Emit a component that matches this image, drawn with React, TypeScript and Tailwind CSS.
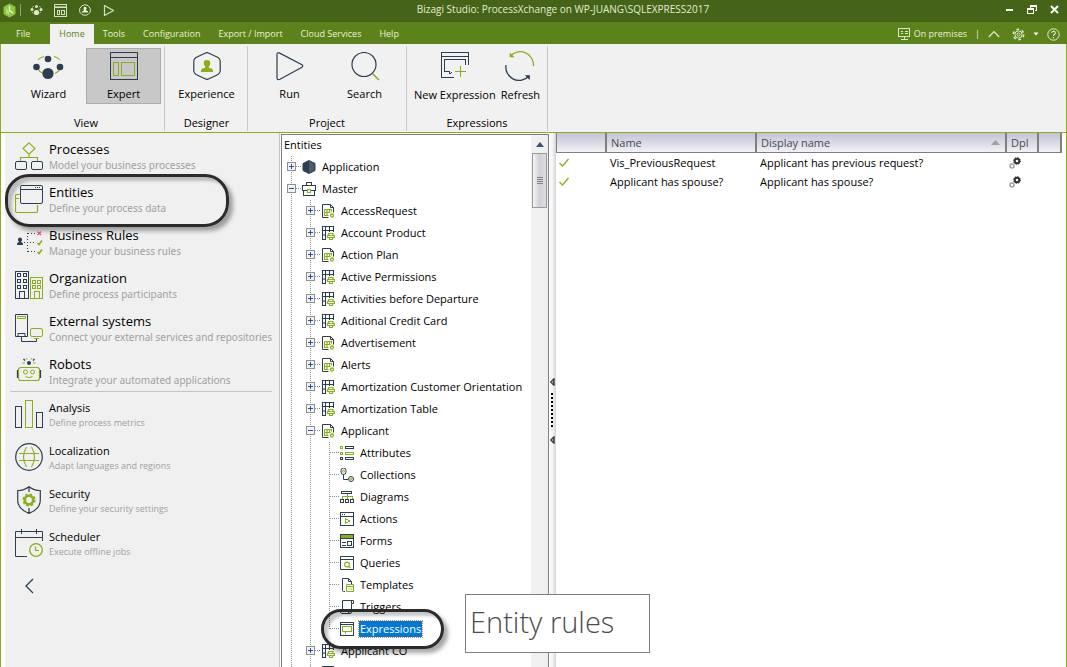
import type { ReactNode } from "react";
import clsx from "clsx";

const NAVY = "#2c3e50";
const GREEN = "#8cae1a";

function Svg({ w, h, children, crisp }: { w: number; h: number; children: ReactNode; crisp?: boolean }) {
  return (
    <svg
      width={w}
      height={h}
      viewBox={`0 0 ${w} ${h}`}
      fill="none"
      stroke={NAVY}
      shapeRendering={crisp ? "crispEdges" : "auto"}
      className="shrink-0"
      aria-hidden="true"
    >
      {children}
    </svg>
  );
}

/* ---------- Title bar ---------- */

function TitleBar() {
  return (
    <header className="flex h-[22px] shrink-0 items-center bg-[#456417] text-[#e3ebd6]">
      <div className="flex flex-1 items-center pb-0.5 pl-[3px]">
        <Svg w={14} h={15}>
          <path d="M6.5 1 L12 4 V11 L6.5 14 L1 11 V4 Z" fill="#8cc63f" stroke="#8cc63f" strokeLinejoin="round" />
          <path d="M6.5 3 V7.5 L10 10" stroke="#e9f7d0" strokeWidth="1.5" />
          <path d="M3 5 V10 L6 12 L6 8 Z" fill="#b5df7c" stroke="none" />
        </Svg>
        <span className="mx-[3px] h-3 w-px bg-[#8fa36f]" />
        <button aria-label="Wizard" className="ml-[6px]">
          <Svg w={13} h={12}>
            <g fill="#dfe8d0" stroke="none">
              <circle cx="6.500" cy="2.500" r="1.500" />
              <circle cx="2" cy="5.500" r="1.500" />
              <circle cx="11" cy="5.500" r="1.500" />
              <circle cx="6.500" cy="8.500" r="2.600" />
            </g>
            <path d="M2 3.500 L4 2.200 M11 3.500 L9 2.200 M2 8 L3.500 9 M11 8 L9.500 9" stroke="#b9c99f" strokeWidth=".8" />
          </Svg>
        </button>
        <button aria-label="Expert" className="ml-[11px]">
          <Svg w={13} h={13} crisp>
            <path d="M.5 .5 H12.5 V12.500 H.5 Z M.5 3.500 H12.500 M3.500 6 V10.500 H5.500 V6 Z M7.500 6 H10.500 V10.500 H7.500 Z" stroke="#d5dfc4" />
            <path d="M1 2 H12" stroke="#9fb080" />
          </Svg>
        </button>
        <button aria-label="Experience" className="ml-3">
          <Svg w={12} h={12}>
            <path d="M6 .7 L9 1.700 L11.300 4.500 V8 L9 10.500 L6 11.400 L3 10.500 L.7 8 V4.500 L3 1.700 Z" stroke="#d5dfc4" />
            <path d="M4.500 4.300 a1.500 1.500 0 0 1 3 0 L7 6.300 L9 7.500 V8.500 H3 V7.500 L5 6.300 Z" fill="#eef3e4" stroke="none" />
          </Svg>
        </button>
        <button aria-label="Run" className="ml-3">
          <Svg w={12} h={13}>
            <path d="M1.500 1.500 L10.500 6.500 L1.500 11.500 Z" stroke="#d5dfc4" strokeWidth="1.200" strokeLinejoin="round" />
          </Svg>
        </button>
      </div>
      <h1 className="pb-1 pl-16 text-[10px] leading-4">
        Bizagi Studio: ProcessXchange on WP-JUANG\SQLEXPRESS2017
      </h1>
      <div className="flex flex-1 items-center justify-end gap-[13px] pr-2 pb-1">
        <button aria-label="Minimize">
          <Svg w={9} h={9} crisp>
            <path d="M1 5 H8" stroke="#fff" strokeWidth="2" />
          </Svg>
        </button>
        <button aria-label="Restore">
          <Svg w={10} h={9} crisp>
            <path d="M3.500 3 V.5 H9.500 V5.500 H7.500 M3 1 H10 M.5 3.500 H6.500 V8.500 H.5 Z M0 4 H7" stroke="#fff" />
          </Svg>
        </button>
        <button aria-label="Close">
          <Svg w={9} h={9}>
            <path d="M1 1 L8 8 M8 1 L1 8" stroke="#fff" strokeWidth="2" />
          </Svg>
        </button>
      </div>
    </header>
  );
}

/* ---------- Ribbon tabs ---------- */

function RibbonTabs() {
  const tabs = ["Tools", "Configuration", "Export / Import", "Cloud Services", "Help"];
  return (
    <nav className="flex h-[22px] shrink-0 items-end bg-[#5c821b] text-[9px] leading-5 font-medium text-[#e9f2d8]">
      <a href="#file" className="mr-[11px] pr-[9px] pl-4">File</a>
      <a href="#home" className="bg-[#f1f1f1] px-[9px] text-[#5c821b]">Home</a>
      {tabs.map((tab) => (
        <a key={tab} href={"#" + tab} className="px-[9px]">{tab}</a>
      ))}
      <div className="ml-auto flex h-5 items-center pr-[7px]">
        <Svg w={12} h={12} crisp>
          <path d="M.5 .5 H11.500 V8.500 H.5 Z M2.500 3.500 H4.500 M2.500 5.500 H4.500 M6.500 3.500 H9.500 M6.500 5.500 H9.500 M6.500 9 V11 M2.500 11.500 H9.500" stroke="#dbe6c4" />
        </Svg>
        <span className="ml-1">On premises</span>
        <span className="mx-2">|</span>
        <button aria-label="Collapse ribbon">
          <Svg w={12} h={8}>
            <path d="M.8 7 L6 1.500 L11.200 7" stroke="#e3edd0" strokeWidth="1.200" />
          </Svg>
        </button>
        <button aria-label="Settings" className="ml-3 flex items-center gap-2">
          <Svg w={13} h={13}>
            <g stroke="#e3edd0">
              <circle cx="6.500" cy="6.500" r="3.600" />
              <circle cx="6.500" cy="6.500" r="1.500" />
              <circle cx="6.500" cy="6.500" r="5.200" strokeWidth="1.600" strokeDasharray="2.700 2.740" />
            </g>
          </Svg>
          <Svg w={6} h={4}>
            <path d="M.5 .5 H5.500 L3 3.500 Z" fill="#fff" stroke="none" />
          </Svg>
        </button>
        <button aria-label="Help" className="ml-2">
          <Svg w={13} h={13}>
            <circle cx="6.500" cy="6.500" r="5.700" stroke="#e3edd0" />
            <path d="M4.700 5 a1.800 1.800 0 1 1 2.600 1.600 Q6.500 7 6.500 8 M6.500 9 V10.200" stroke="#e3edd0" strokeWidth="1.100" />
          </Svg>
        </button>
      </div>
    </nav>
  );
}

/* ---------- Ribbon ---------- */

const ribbonIcons = {
  wizard: (
    <Svg w={32} h={30}>
      <path d="M5 8 Q7 5.500 11 4.500 M27 8 Q25 5.500 21 4.500 M5 17 Q6.500 20 10 21.500 M27 17 Q25.500 20 22 21.500" stroke={GREEN} strokeWidth="1.100" />
      <g fill={NAVY} stroke="none">
        <circle cx="15" cy="7" r="3.300" />
        <circle cx="3.500" cy="15" r="3.300" />
        <circle cx="27" cy="15" r="3.300" />
        <circle cx="15" cy="21.500" r="5.600" />
      </g>
    </Svg>
  ),
  expert: (
    <Svg w={28} h={30} crisp>
      <path d="M.5 .5 H27.500 V27.500 H.5 Z M0 5.500 H28" />
      <path d="M3.500 10.500 H8.500 V23.500 H3.500 Z M11.500 10.500 H24.500 V23.500 H11.500 Z" stroke={GREEN} />
    </Svg>
  ),
  experience: (
    <Svg w={28} h={30}>
      <path d="M12 1.200 Q14 .2 16 1.200 L25 5.500 Q27 6.800 27.200 9 V19 Q27 21.200 25 22.500 L16 26.800 Q14 27.800 12 26.800 L3 22.500 Q1 21.200 .8 19 V9 Q1 6.800 3 5.500 Z" strokeWidth="1.200" />
      <path d="M14 8 a3.300 3.300 0 0 1 3.300 3.300 q0 2 -1.500 3.300 v1.200 q4 .6 4.200 2.700 v1.500 h-12 v-1.500 q.2 -2.100 4.200 -2.700 v-1.200 q-1.500 -1.300 -1.500 -3.300 a3.300 3.300 0 0 1 3.300 -3.300 Z" fill={GREEN} stroke="none" />
    </Svg>
  ),
  run: (
    <Svg w={28} h={30}>
      <path d="M1 2.200 Q1 .3 3.200 .9 L26 12.800 Q27.500 14 26 15.200 L4 27.300 Q1 28.300 1 26 Z" strokeWidth="1.200" />
    </Svg>
  ),
  search: (
    <Svg w={30} h={30}>
      <circle cx="14" cy="12.500" r="12" strokeWidth="1.200" />
      <path d="M22.500 21.500 L29 28" stroke={GREEN} strokeWidth="1.500" />
    </Svg>
  ),
  newExpression: (
    <Svg w={28} h={30} crisp>
      <path d="M13 26.500 H.5 V1.500 H27.500 V14 M0 5.500 H28 M24.500 14 V8.500 H3.500 V20.500 H8.500 V23" />
      <path d="M8.500 23.500 L11 21" />
      <path d="M19.500 15 V26 M14 20.500 H25" stroke={GREEN} />
    </Svg>
  ),
  refresh: (
    <Svg w={30} h={30}>
      <path d="M5 5.500 A13.300 13.300 0 0 1 28.500 15" stroke={GREEN} strokeWidth="1.300" />
      <path d="M5 2 V6 H9 Z" fill={GREEN} stroke={GREEN} strokeWidth=".6" />
      <path d="M1 14 A13.300 13.300 0 0 0 24 25" strokeWidth="1.300" />
      <path d="M20.500 24.500 H24.500 V28.500 Z" fill={NAVY} strokeWidth=".6" />
    </Svg>
  ),
};

function RibbonButton({ icon, label, active, compact }: { icon: ReactNode; label: string; active?: boolean; compact?: boolean }) {
  return (
    <button
      className={clsx(
        "flex h-14 flex-col items-center pt-[3px] leading-5 whitespace-nowrap",
        !compact && "w-[75px] border",
        compact ? "gap-1 pt-1" : "gap-0.5",
        active ? "border-[#adadad] bg-[#c8c8c8]" : "border-transparent",
      )}
    >
      {icon}
      {label}
    </button>
  );
}

function RibbonGroup({ title, children, className }: { title: string; children: ReactNode; className: string }) {
  return (
    <section className={clsx("flex flex-col border-r border-[#c9c9c9]", className)}>
      <div className="flex justify-center gap-[inherit] pt-0.5">{children}</div>
      <h2 className="mt-auto text-center leading-4">{title}</h2>
    </section>
  );
}

function Ribbon() {
  return (
    <div className="flex h-[89px] shrink-0 border-b border-[#8cae1a] bg-[#f1f1f1] pt-0.5 pb-px text-[11px] text-black">
      <RibbonGroup title="View" className="pr-[3px] pl-[10px]">
        <RibbonButton icon={ribbonIcons.wizard} label="Wizard" />
        <RibbonButton icon={ribbonIcons.expert} label="Expert" active />
      </RibbonGroup>
      <RibbonGroup title="Designer" className="pr-[3px] pl-1">
        <RibbonButton icon={ribbonIcons.experience} label="Experience" />
      </RibbonGroup>
      <RibbonGroup title="Project" className="px-1">
        <RibbonButton icon={ribbonIcons.run} label="Run" />
        <RibbonButton icon={ribbonIcons.search} label="Search" />
      </RibbonGroup>
      <RibbonGroup title="Expressions" className="gap-[5px] px-[7px]">
        <RibbonButton icon={ribbonIcons.newExpression} label="New Expression" compact />
        <RibbonButton icon={ribbonIcons.refresh} label="Refresh" compact />
      </RibbonGroup>
    </div>
  );
}

/* ---------- Sidebar ---------- */

const windows = (x: number, y: number) => `M${x} ${y} h3 v3 h-3 Z`;

const sideIcons = {
  processes: (
    <Svg w={28} h={28}>
      <path d="M14 .8 L20 6.500 L14 12.200 L8 6.500 Z M14 12.500 V15.500 M5.500 19 V15.500 H22.500 V19" stroke={GREEN} strokeWidth="1.100" />
      <rect x=".5" y="19.500" width="11" height="8" rx="1.500" />
      <rect x="16.500" y="19.500" width="11" height="8" rx="1.500" />
    </Svg>
  ),
  entities: (
    <Svg w={28} h={28}>
      <path d="M5 9.500 H2 Q.5 9.500 .5 11 V26 Q.5 27.500 2 27.500 H21 Q22.500 27.500 22.500 26 V20 M.5 13.500 H4" stroke={GREEN} strokeWidth="1.200" />
      <rect x="5.500" y=".5" width="22" height="18" rx="1.500" />
      <path d="M5.500 4.500 H27.500" />
      <path d="M20 2.500 H21 M22 2.500 H23 M24 2.500 H25" />
    </Svg>
  ),
  rules: (
    <Svg w={28} h={28}>
      <path d="M5 9.500 a2 2 0 0 1 2 2 q0 1.500 -1 2.500 q2 .5 2 2 v1 h-6 v-1 q0 -1.500 2 -2 q-1 -1 -1 -2.500 a2 2 0 0 1 2 -2 Z" fill={NAVY} stroke="none" />
      <path d="M9 14.500 H20 M12.500 5 V25 M13 5.500 H20 M13 23.500 H20" strokeDasharray="1 2" />
      <path d="M22.500 3.500 L26 7 M26 3.500 L22.500 7" stroke="#d9536a" strokeWidth="1.300" />
      <path d="M22.500 15 L24 16.500 L27 12.500 M22.500 24 L24 25.500 L27 21.500" stroke={GREEN} strokeWidth="1.600" />
    </Svg>
  ),
  organization: (
    <Svg w={28} h={28} crisp>
      <path d={`M.5 .5 H13.500 V27.500 H.5 Z M4.500 27 V20.500 H9.500 V27 ${windows(2.5, 2.5)} ${windows(8.5, 2.5)} ${windows(2.5, 8.5)} ${windows(8.5, 8.5)} ${windows(2.5, 14.5)} ${windows(8.5, 14.5)}`} />
      <path d={`M15.500 6.500 H27.500 V27.500 H15.500 Z M19.500 27 V20.500 H24.500 V27 ${windows(17.5, 9)} ${windows(22.5, 9)} ${windows(17.5, 14.5)} ${windows(22.5, 14.5)}`} stroke={GREEN} />
    </Svg>
  ),
  external: (
    <Svg w={28} h={28}>
      <path d="M.5 .5 H12.500 V22.500 H.5 Z M3 22 V19.500 H10 V22 M6.500 23 V27.500 H21.500 V25" />
      <path d="M2.500 2.500 H10.500 V4.500 H2.500 Z M17 14.500 H26 Q27.500 14.500 27.500 16 V21 Q27.500 22.500 26 22.500 H17 Q15.500 22.500 15.500 21 V16 Q15.500 14.500 17 14.500 Z M19 24.500 H24" stroke={GREEN} />
    </Svg>
  ),
  robots: (
    <Svg w={28} h={28}>
      <circle cx="14" cy="6" r="2" fill={NAVY} stroke="none" />
      <path d="M10 3.500 L8.500 2 M18 3.500 L19.500 2" strokeWidth="1.300" />
      <path d="M10 6 H7.500 M18 6 H20.500 M12 2.500 L11 1 M16 2.500 L17 1" stroke={GREEN} />
      <rect x="3.500" y="10.500" width="21" height="13" rx="2.500" stroke={GREEN} strokeWidth="1.200" />
      <path d="M2.500 13 V21 M25.500 13 V21" strokeWidth="1.200" />
      <circle cx="10.500" cy="15" r="2" stroke={GREEN} />
      <circle cx="17.500" cy="15" r="2" stroke={GREEN} />
      <path d="M10.500 19.500 Q14 22 17.500 19.500" stroke={GREEN} />
    </Svg>
  ),
  analysis: (
    <Svg w={28} h={28} crisp>
      <path d="M.5 6.500 H6.500 V27.500 H.5 Z M21.500 12.500 H27.500 V27.500 H21.500 Z" />
      <path d="M10.500 .5 H17.500 V27.500 H10.500 Z" stroke={GREEN} />
    </Svg>
  ),
  localization: (
    <Svg w={28} h={28}>
      <circle cx="14" cy="14" r="13.300" strokeWidth="1.200" />
      <path d="M4 10.500 H24 M4 17.500 H24 M11.500 4 Q5.500 14 11.500 24 M16.500 4 Q22.500 14 16.500 24" stroke={GREEN} strokeWidth="1.100" />
    </Svg>
  ),
  security: (
    <Svg w={28} h={28}>
      <path d="M14 .7 Q9 4.500 2.700 4.500 V14 Q2.700 23 14 27.400 Q25.300 23 25.300 14 V4.500 Q19 4.500 14 .7 Z M14 1 V6 M14 22 V27" strokeWidth="1.200" />
      <circle cx="14" cy="14" r="4.200" stroke={GREEN} strokeWidth="2.600" />
      <circle cx="14" cy="14" r="5.800" stroke={GREEN} strokeWidth="1.600" strokeDasharray="2.400 2.155" />
    </Svg>
  ),
  scheduler: (
    <Svg w={28} h={28}>
      <path d="M12 27.500 H.5 V2.500 H27.500 V12 M.5 8.500 H27.500 M6.500 0 V5 M21.500 0 V5" />
      <circle cx="21" cy="21" r="6.300" stroke={GREEN} strokeWidth="1.300" />
      <path d="M20.500 17.500 V21.500 H24" stroke={GREEN} strokeWidth="1.200" />
    </Svg>
  ),
};

const primaryItems = [
  { icon: sideIcons.processes, title: "Processes", text: "Model your business processes" },
  { icon: sideIcons.entities, title: "Entities", text: "Define your process data", marked: true },
  { icon: sideIcons.rules, title: "Business Rules", text: "Manage your business rules" },
  { icon: sideIcons.organization, title: "Organization", text: "Define process participants" },
  { icon: sideIcons.external, title: "External systems", text: "Connect your external services and repositories" },
  { icon: sideIcons.robots, title: "Robots", text: "Integrate your automated applications" },
];

const secondaryItems = [
  { icon: sideIcons.analysis, title: "Analysis", text: "Define process metrics" },
  { icon: sideIcons.localization, title: "Localization", text: "Adapt languages and regions" },
  { icon: sideIcons.security, title: "Security", text: "Define your security settings" },
  { icon: sideIcons.scheduler, title: "Scheduler", text: "Execute offline jobs" },
];

function SideItem({ icon, title, text, marked, small }: { icon: ReactNode; title: string; text: string; marked?: boolean; small?: boolean }) {
  return (
    <li className="relative">
      {marked && (
        <span className="pointer-events-none absolute -top-1 left-0 h-[53px] w-56 rounded-[24px] border-3 border-[#2b2b2b] shadow-[4px_4px_4px_rgba(0,0,0,0.35),inset_4px_4px_3px_rgba(0,0,0,0.22)]" />
      )}
      <a href={"#" + title} className="relative flex h-[43px] items-center gap-[6px] pb-px pl-[10px]">
        {icon}
        <span className="flex flex-col pt-px whitespace-nowrap">
          <span className={clsx("leading-4 text-black", small ? "text-[11px]" : "text-[13px]")}>{title}</span>
          <span
            className={clsx(
              "text-[#a0a0a0]",
              small ? "text-[9px] leading-[14px]" : "font-['Noto_Sans',sans-serif] text-[10px] leading-4",
            )}
          >
            {text}
          </span>
        </span>
      </a>
    </li>
  );
}

function Sidebar() {
  return (
    <aside className="ml-1 w-[275px] shrink-0 border-r border-[#c4c4c4] bg-[#f0f0f0] pt-0.5">
      <ul>
        {primaryItems.map((item) => (
          <SideItem key={item.title} {...item} />
        ))}
      </ul>
      <hr className="-mt-0.5 mr-[7px] mb-px ml-[5px] border-[#c4c4c4]" />
      <ul>
        {secondaryItems.map((item) => (
          <SideItem key={item.title} {...item} small />
        ))}
      </ul>
      <button aria-label="Collapse panel" className="mt-[13px] ml-5 block">
        <Svg w={9} h={16}>
          <path d="M8 1 L1 8 L8 15" strokeWidth="1.300" />
        </Svg>
      </button>
    </aside>
  );
}

/* ---------- Entity tree ---------- */

const treeIcons = {
  application: (
    <Svg w={14} h={14}>
      <path d="M7 .5 L13 3.500 V10.500 L7 13.500 L1 10.500 V3.500 Z" fill={NAVY} />
      <path d="M7 1 L12.500 4 V10 L7 13 Z" fill="#4a5b6c" stroke="none" />
    </Svg>
  ),
  master: (
    <Svg w={14} h={14} crisp>
      <path d="M.5 3.500 H13.500 V8.500 H.5 Z M4.500 3 V.5 H9.500 V3 M1.500 9 V13.500 H12.500 V9" />
      <path d="M5.500 7.500 H8.500 V10.500 H5.500 Z" stroke={GREEN} fill="#fff" />
    </Svg>
  ),
  entity: (
    <Svg w={14} h={14}>
      <path d="M12.500 8.500 V3.500 L9.500 .5 H1.500 V13.500 H7.500 M9.500 .5 V3.500 H12.500" />
      <path d="M3.500 5.500 H10.500 V7.500 M3.500 5.500 V11.500 H7.500 M3.500 8.500 H9.500 M6 5.500 V11.500 M8.500 5.500 V9" stroke={GREEN} strokeWidth="1.200" />
      <circle cx="11" cy="11.500" r="1.500" stroke={GREEN} strokeWidth="1.300" />
    </Svg>
  ),
  parameter: (
    <Svg w={14} h={14}>
      <path d="M5 13.500 H1.500 V.5 H12.500 V6 M1.500 4.500 H12.500 M4.500 .5 V13.500 M8.500 .5 V6 M1.500 9 H5" strokeWidth="1.100" />
      <path d="M7.500 9 V7.500 H12 V9 M6.500 11.500 V9.500 H13.300 V11.500 Z M8.500 11.500 V13.500 H11.500 V11.500" stroke={GREEN} strokeWidth="1.200" />
    </Svg>
  ),
  attributes: (
    <Svg w={14} h={14} crisp>
      <path d="M.5 6 H2.500 V8 H.5 Z M5.500 .5 H13.500 V2.500 H5.500 Z M.5 11.500 H2.500 V13.500 H.5 Z M5.500 11.500 H13.500 V13.500 H5.500 Z" />
      <path d="M.5 .5 H2.500 V2.500 H.5 Z M5.500 6 H13.500 V8 H5.500 Z M.5 6 H2.500 V8 H.5 Z" stroke={GREEN} />
    </Svg>
  ),
  collections: (
    <Svg w={14} h={14}>
      <path d="M1 2.500 A2.500 2.500 0 0 1 6 2.500 V4 A2.500 2.500 0 0 1 1 4 Z M3.500 6.500 V11.500 H8" />
      <circle cx="11" cy="11" r="2.500" />
      <circle cx="3.500" cy="3.200" r="1" stroke={GREEN} />
      <circle cx="11" cy="11" r="1" stroke={GREEN} />
    </Svg>
  ),
  diagrams: (
    <Svg w={14} h={14} crisp>
      <path d="M1.500 1.500 H11.500 V3.500 H1.500 Z M.5 9.500 H3.500 V12.500 H.5 Z M5.500 9.500 H8.500 V12.500 H5.500 Z M10.500 9.500 H13.500 V12.500 H10.500 Z" />
      <path d="M7 4 V9 M2 9 V6.500 H12 V9" stroke={GREEN} />
    </Svg>
  ),
  actions: (
    <Svg w={14} h={14} crisp>
      <path d="M.5 .5 H13.500 V13.500 H.5 Z M.5 4.500 H13.500 M2 2.500 H3 M4 2.500 H5" />
      <path d="M5.500 6.500 V11.500 L9.500 9 Z" stroke={GREEN} />
    </Svg>
  ),
  forms: (
    <Svg w={14} h={14} crisp>
      <path d="M.5 .5 H13.500 V13.500 H.5 Z M2 8.500 H6 M2 11.500 H6 M7.500 7.500 H11.500 V11.500 H7.500 Z M0 4.500 H14" />
      <path d="M1 2.500 H13" stroke={GREEN} strokeWidth="3" />
    </Svg>
  ),
  queries: (
    <Svg w={14} h={14}>
      <path d="M.5 .5 H13.500 V13.500 H.5 Z M.5 3.500 H13.500" />
      <circle cx="7" cy="8.500" r="2.400" stroke={GREEN} strokeWidth="1.200" />
      <path d="M8.500 10.500 L10.500 12" stroke={GREEN} strokeWidth="1.300" />
    </Svg>
  ),
  templates: (
    <Svg w={14} h={14}>
      <path d="M5 13.500 H3.500 Q2.500 13.500 2.500 12.500 V.5 H8.500 L11.500 3.500 V6 M8.500 .5 V3.500 H11.500" />
      <path d="M6.500 6.500 H13.500 V13.500 H6.500 Z M6.500 8.500 H13.500 M8.500 11 H9.500 M10.500 11 H12" stroke={GREEN} />
    </Svg>
  ),
  triggers: (
    <Svg w={14} h={14}>
      <path d="M2.500 9.500 V.5 H13.500 V3.500 H11.500 V12 Q11.500 13.500 10 13.500 H2 Q.5 13.500 .5 11.500 V10.500 H8.500 V12 Q8.500 13.500 10 13.500 M11.500 3.500 V1" />
    </Svg>
  ),
  expressions: (
    <Svg w={14} h={14} crisp>
      <path d="M.5 .5 H13.500 V13.500 H.5 Z M.5 2.500 H13.500" />
      <path d="M2.500 4.500 H11.500 V9.500 H6.500 L5 11.500 V9.500 H2.500 Z" stroke={GREEN} />
    </Svg>
  ),
};

type Row = { label: string; icon: ReactNode; level: number; state?: "open" | "closed"; last?: boolean; selected?: boolean };

const entity = (label: string): Row => ({ label, icon: treeIcons.entity, level: 1, state: "closed" });
const parameter = (label: string): Row => ({ label, icon: treeIcons.parameter, level: 1, state: "closed" });
const leaf = (label: string, icon: ReactNode): Row => ({ label, icon, level: 2 });

const rows: Row[] = [
  { label: "Application", icon: treeIcons.application, level: 0, state: "closed" },
  { label: "Master", icon: treeIcons.master, level: 0, state: "open" },
  entity("AccessRequest"),
  parameter("Account Product"),
  entity("Action Plan"),
  parameter("Active Permissions"),
  parameter("Activities before Departure"),
  parameter("Aditional Credit Card"),
  entity("Advertisement"),
  entity("Alerts"),
  parameter("Amortization Customer Orientation"),
  parameter("Amortization Table"),
  { label: "Applicant", icon: treeIcons.entity, level: 1, state: "open" },
  leaf("Attributes", treeIcons.attributes),
  leaf("Collections", treeIcons.collections),
  leaf("Diagrams", treeIcons.diagrams),
  leaf("Actions", treeIcons.actions),
  leaf("Forms", treeIcons.forms),
  leaf("Queries", treeIcons.queries),
  leaf("Templates", treeIcons.templates),
  leaf("Triggers", treeIcons.triggers),
  { label: "Expressions", icon: treeIcons.expressions, level: 2, last: true, selected: true },
  parameter("Applicant CO"),
  parameter(""),
];

/* One indent cell: the dotted connector of a level, with a branch to the item when it has one. */
function Guide({ branch, last, state }: { branch?: boolean; last?: boolean; state?: "open" | "closed" }) {
  return (
    <Svg w={19} h={22} crisp>
      <path d={last ? "M9.500 0 V11" : "M9.500 0 V22"} stroke="#909090" strokeDasharray="1 1" />
      {branch && <path d="M10 10.500 H19" stroke="#909090" strokeDasharray="1 1" />}
      {state && (
        <>
          <rect x="5.500" y="6.500" width="8" height="8" rx="1" fill="#f2f2f2" stroke="#8f8f8f" />
          <path d={state === "closed" ? "M7 10.500 H12 M9.500 8 V13" : "M7 10.500 H12"} stroke="#2c4fa0" />
        </>
      )}
    </Svg>
  );
}

function TreeRow({ row }: { row: Row }) {
  const guide = <Guide branch last={row.last} state={row.state} />;
  return (
    <li className="relative flex h-[22px] items-center whitespace-nowrap">
      {row.level > 0 && <Guide />}
      {row.level > 1 && <Guide />}
      {row.state ? <button aria-label={"Toggle " + row.label}>{guide}</button> : guide}
      <button className="flex items-center">
        <span className="flex w-5 shrink-0 pl-px">{row.icon}</span>
        {row.label && (
          <span
            className={clsx(
              "px-px leading-4",
              row.selected ? "bg-[#0078d7] text-white outline-1 outline-[#e08a30] outline-dotted" : "text-black",
            )}
          >
            {row.label}
          </span>
        )}
      </button>
      {row.selected && (
        <span className="pointer-events-none absolute -top-[9px] left-[39px] z-10 h-10 w-[123px] rounded-full border-3 border-[#2b2b2b] shadow-[4px_4px_4px_rgba(0,0,0,0.35),inset_4px_4px_3px_rgba(0,0,0,0.22)]" />
      )}
    </li>
  );
}

function EntityTree() {
  return (
    <section className="mt-px ml-px flex w-[268px] shrink-0 overflow-hidden border border-b-0 border-[#7d7f86] bg-white text-[11px]">
      <div className="min-w-0 flex-1">
        <h2 className="pb-px pl-0.5 leading-5 text-black">Entities</h2>
        <ul>
          {rows.map((row) => (
            <TreeRow key={row.label} row={row} />
          ))}
        </ul>
      </div>
      <div className="flex w-[17px] shrink-0 flex-col items-stretch bg-[#f0f0f0] px-px">
        <button aria-label="Scroll up" className="flex h-[18px] items-center justify-center">
          <Svg w={8} h={5}>
            <path d="M0 5 L4 0 L8 5 Z" fill="#3f4d78" stroke="none" />
          </Svg>
        </button>
        <div className="flex h-[55px] items-center justify-center border border-[#9a9a9e] bg-linear-to-r from-[#f4f4f5] via-[#d0d0d5] to-[#dedee2]">
          <Svg w={6} h={8} crisp>
            <path d="M0 .5 H6 M0 2.500 H6 M0 4.500 H6 M0 6.500 H6" stroke="#85858a" />
          </Svg>
        </div>
      </div>
    </section>
  );
}

function Splitter() {
  return (
    <div className="flex w-[7px] shrink-0 flex-col items-center justify-center bg-linear-to-r from-white via-[#f4f4f4] to-[#d4d4d6] pt-[22px]">
      <Svg w={5} h={66}>
        <path d="M4 .5 V7.500 L.5 4 Z M4 58.500 V65.500 L.5 62 Z" stroke="#000" fill="#999" />
        <path d="M2 15 V50" stroke="#000" strokeWidth="2" strokeDasharray="2 2" />
      </Svg>
    </div>
  );
}

/* ---------- Expressions table ---------- */

const expressions = [
  { name: "Vis_PreviousRequest", display: "Applicant has previous request?" },
  { name: "Applicant has spouse?", display: "Applicant has spouse?" },
];

function ExpressionsTable() {
  const th = "h-5 border-r-2 border-b border-[#7f7f7f] p-0 pl-1 text-left font-normal text-[#4a4a50]";
  return (
    <section className="min-w-0 flex-1 bg-white pr-1 text-[11px]">
      <table className="w-full table-fixed border-separate border-spacing-0 leading-4 text-black">
        <colgroup>
          <col className="w-[51px]" />
          <col className="w-[150px]" />
          <col />
          <col className="w-8" />
          <col className="w-[23px]" />
        </colgroup>
        <thead className="bg-linear-to-b from-[#c2c2d6] to-[#f4f4f8]">
          <tr>
            <th className={clsx(th, "border-l")} aria-label="Status" />
            <th className={th}>Name</th>
            <th className={th}>
              <span className="flex items-center justify-between pr-[5px]">
                Display name
                <Svg w={9} h={5}>
                  <path d="M0 5 L4.500 0 L9 5 Z" fill="#a0a0a4" stroke="none" />
                </Svg>
              </span>
            </th>
            <th className={th}>Dpl</th>
            <th className={th} aria-label="More" />
          </tr>
        </thead>
        <tbody>
          {expressions.map((row) => (
            <tr key={row.name} className="h-[19px]">
              <td className="p-0 pl-[3px]">
                <Svg w={10} h={9}>
                  <path d="M.5 5 L3.500 8 L9.500 1" stroke={GREEN} strokeWidth="1.300" />
                </Svg>
              </td>
              <td className="p-0 pl-[3px] whitespace-nowrap">{row.name}</td>
              <td className="p-0 pl-[3px] whitespace-nowrap">{row.display}</td>
              <td className="p-0 pl-0.5">
                <Svg w={12} h={12}>
                  <circle cx="8" cy="4" r="2.300" stroke="#333" strokeWidth="2" />
                  <circle cx="8" cy="4" r="3.400" stroke="#333" strokeWidth="1" strokeDasharray="1.300 1.370" />
                  <circle cx="3" cy="9" r="2" stroke="#a0a0a0" strokeWidth="1.500" />
                </Svg>
              </td>
              <td className="p-0" />
            </tr>
          ))}
        </tbody>
      </table>
    </section>
  );
}

export default function App() {
  return (
    <div className="flex h-screen flex-col overflow-hidden bg-white font-['Open_Sans',sans-serif]">
      <TitleBar />
      <RibbonTabs />
      <div className="flex min-h-0 flex-1 flex-col border-x border-[#8cae1a]">
        <Ribbon />
        <main className="relative flex min-h-0 flex-1">
          <Sidebar />
          <EntityTree />
          <Splitter />
          <ExpressionsTable />
          <p className="absolute top-[461px] left-[464px] z-20 flex h-[59px] w-[185px] items-center border border-[#7f7f7f] bg-white pb-1 pl-1 text-[29px] font-light text-[#4d4d4d]">
            Entity rules
          </p>
        </main>
      </div>
    </div>
  );
}
